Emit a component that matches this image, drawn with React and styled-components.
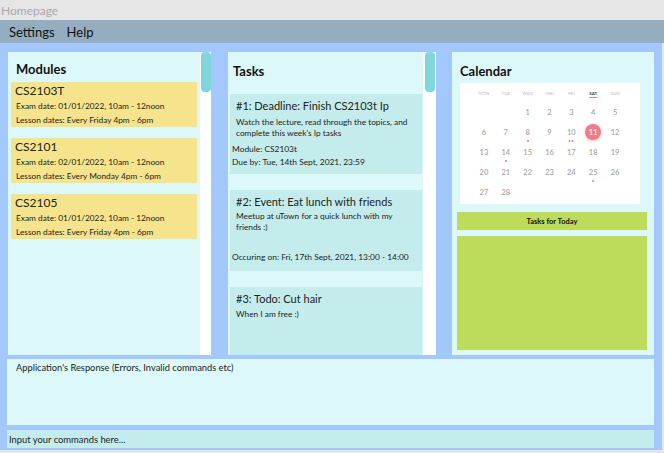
import React from 'react'
import styled, { createGlobalStyle } from 'styled-components'

const Global = createGlobalStyle`
    html, body { margin: 0; padding: 0; }
    body {
        width: 664px;
        height: 453px;
        overflow: hidden;
        font-family: Lato, "Noto Sans", sans-serif;
        background: #e6e6e6;
    }
`

const Window = styled.div`
    width: 664px;
    height: 453px;
    display: flex;
    flex-direction: column;
`
const TitleBar = styled.div`
    height: 20px;
    background: #e6e6e6;
    color: #a8a8a8;
    font-size: 12px;
    line-height: 22px;
    padding-left: 1px;
`
const MenuBar = styled.div`
    height: 23px;
    background: #95adc1;
    display: flex;
    gap: 12px;
    padding-left: 9px;
    align-items: center;
    font-size: 13px;
    color: #111;
`
const Main = styled.div`
    flex: 1;
    background: #a3c8fd;
    margin-right: 2px;
    margin-bottom: 3px;
    padding: 9px 8px 2px 7px;
    display: flex;
    flex-direction: column;
`
const Row = styled.div`
    display: flex;
    height: 303px;
    padding-left: 1px;
`
const Panel = styled.div`
    width: ${p => p.w}px;
    margin-right: ${p => p.mr || 0}px;
    background: #ddf8f9;
    display: flex;
    overflow: hidden;
`
const PanelBody = styled.div`
    flex: 1;
    min-width: 0;
    padding: ${p => p.pad};
    display: flex;
    flex-direction: column;
`
const Track = styled.div`
    width: ${p => p.w}px;
    background: #fff;
    display: flex;
    justify-content: center;
`
const Thumb = styled.div`
    width: 10px;
    height: 40px;
    border-radius: 4px;
    background: #7fd7dd;
`
const PanelTitle = styled.div`
    font-weight: 700;
    font-size: 13px;
    color: #111;
    margin: ${p => p.m};
`
const ModuleCard = styled.div`
    background: #f5e48c;
    height: 45px;
    margin-bottom: 11px;
    padding: 2px 0 0 4px;
    box-sizing: border-box;
    color: #222;
`
const ModuleCode = styled.div`
    font-size: 12px;
    line-height: 14px;
    margin-bottom: 1px;
`
const Small = styled.div`
    font-size: ${p => p.fs || 8.3}px;
    line-height: ${p => p.lh || 14}px;
    color: #222;
    padding-left: ${p => p.pl || 0}px;
    margin-top: ${p => p.mt || 0}px;
    white-space: nowrap;
`
const TaskCard = styled.div`
    background: #c5ecec;
    height: ${p => p.h}px;
    margin-bottom: ${p => p.mb || 0}px;
    padding: 5px 0 0 2px;
    box-sizing: border-box;
    flex-shrink: 0;
`
const TaskTitle = styled.div`
    font-size: 11px;
    color: #222;
    padding-left: 4px;
    line-height: 14px;
    margin-bottom: 2px;
`
const CalBox = styled.div`
    margin: 4px 14px 0 8px;
    background: #fff;
    height: 121px;
    padding: 2px 14px 0 13px;
    box-sizing: border-box;
    display: grid;
    grid-template-columns: repeat(7, 1fr);
    grid-auto-rows: 20px;
    grid-template-rows: 18px;
`
const WeekDay = styled.div`
    font-size: 4.5px;
    color: ${p => (p.active ? '#444' : '#bbb')};
    font-weight: ${p => (p.active ? 700 : 400)};
    display: flex;
    flex-direction: column;
    align-items: center;
    padding-top: 6px;
    &::after {
        content: '';
        width: 8px;
        height: 1px;
        margin-top: 1px;
        background: ${p => (p.active ? '#f27a89' : 'transparent')};
    }
`
const Day = styled.div`
    position: relative;
    display: flex;
    align-items: center;
    justify-content: center;
    font-size: 7.5px;
    font-weight: 600;
    color: #a8a8a8;
    padding-bottom: 2px;
`
const Today = styled.span`
    width: 16px;
    height: 16px;
    border-radius: 50%;
    background: #f27a89;
    color: #fff;
    display: flex;
    align-items: center;
    justify-content: center;
    box-shadow: 0 1px 3px rgba(242, 122, 137, 0.5);
`
const Dots = styled.span`
    position: absolute;
    bottom: 1px;
    left: 50%;
    transform: translateX(-50%);
    display: flex;
    gap: 1px;
    i {
        width: 2px;
        height: 2px;
        border-radius: 50%;
        background: #f27a89;
    }
`
const TodayBar = styled.div`
    margin: 8px 7px 0 5px;
    height: 18px;
    background: #bddc5c;
    font-size: 7.5px;
    font-weight: 700;
    color: #111;
    display: flex;
    align-items: center;
    justify-content: center;
`
const TodayBox = styled.div`
    margin: 6px 7px 5px 5px;
    flex: 1;
    background: #bddc5c;
`
const Response = styled.div`
    margin-top: 4px;
    height: 66px;
    background: #ddf8f9;
    font-size: 9.3px;
    color: #222;
    padding: 3px 0 0 9px;
    box-sizing: border-box;
`
const Input = styled.div`
    margin-top: 5px;
    height: 18px;
    background: #c5ecec;
    font-size: 9.4px;
    color: #222;
    padding-left: 2px;
    display: flex;
    align-items: center;
`

const modules = [
    { code: 'CS2103T', exam: '01/01/2022, 10am - 12noon', lesson: 'Every Friday 4pm - 6pm' },
    { code: 'CS2101', exam: '02/01/2022, 10am - 12noon', lesson: 'Every Monday 4pm - 6pm' },
    { code: 'CS2105', exam: '01/01/2022, 10am - 12noon', lesson: 'Every Friday 4pm - 6pm' },
]

const weekdays = ['MON', 'TUE', 'WED', 'THU', 'FRI', 'SAT', 'SUN']
const dots = { 8: 1, 10: 2, 14: 1, 25: 1 }

function Calendar() {
    const cells = [null, null]
    for (let d = 1; d <= 28; d++) cells.push(d)
    return (
        <CalBox>
            {weekdays.map(w => (
                <WeekDay key={w} active={w === 'SAT'}>{w}</WeekDay>
            ))}
            {cells.map((d, i) => (
                <Day key={i}>
                    {d === 11 ? <Today>11</Today> : d}
                    {dots[d] && (
                        <Dots>
                            {Array.from({ length: dots[d] }).map((_, j) => <i key={j} />)}
                        </Dots>
                    )}
                </Day>
            ))}
        </CalBox>
    )
}

export default function App() {
    return (
        <Window>
            <Global />
            <TitleBar>Homepage</TitleBar>
            <MenuBar>
                <span>Settings</span>
                <span>Help</span>
            </MenuBar>
            <Main>
                <Row>
                    <Panel w={203} mr={17}>
                        <PanelBody pad="0 3px 0 3px">
                            <PanelTitle m="9px 0 5px 5px">Modules</PanelTitle>
                            {modules.map(m => (
                                <ModuleCard key={m.code}>
                                    <ModuleCode>{m.code}</ModuleCode>
                                    <Small pl={1}>Exam date: {m.exam}</Small>
                                    <Small pl={1}>Lesson dates: {m.lesson}</Small>
                                </ModuleCard>
                            ))}
                        </PanelBody>
                        <Track w={11}><Thumb /></Track>
                    </Panel>
                    <Panel w={208} mr={16}>
                        <PanelBody pad="0 1px 0 2px">
                            <PanelTitle m="11px 0 15px 3px">Tasks</PanelTitle>
                            <TaskCard h={80} mb={16}>
                                <TaskTitle>#1: Deadline: Finish CS2103t Ip</TaskTitle>
                                <Small pl={4} lh={11} mt={4}>Watch the lecture, read through the topics, and<br />complete this week's Ip tasks</Small>
                                <Small fs={8.4} mt={4} lh={13}>Module: CS2103t</Small>
                                <Small fs={8.4} lh={13}>Due by: Tue, 14th Sept, 2021, 23:59</Small>
                            </TaskCard>
                            <TaskCard h={81} mb={16}>
                                <TaskTitle>#2: Event: Eat lunch with friends</TaskTitle>
                                <Small pl={4} lh={11} mt={2}>Meetup at uTown for a quick lunch with my<br />friends :)</Small>
                                <Small fs={8.4} mt={18} lh={13}>Occuring on: Fri, 17th Sept, 2021, 13:00 - 14:00</Small>
                            </TaskCard>
                            <TaskCard h={80}>
                                <TaskTitle>#3: Todo: Cut hair</TaskTitle>
                                <Small pl={4} lh={13} mt={2}>When I am free :)</Small>
                            </TaskCard>
                        </PanelBody>
                        <Track w={13}><Thumb /></Track>
                    </Panel>
                    <Panel w={202}>
                        <PanelBody pad="0">
                            <PanelTitle m="11px 0 0 8px">Calendar</PanelTitle>
                            <Calendar />
                            <TodayBar>Tasks for Today</TodayBar>
                            <TodayBox />
                        </PanelBody>
                    </Panel>
                </Row>
                <Response>Application's Response (Errors, Invalid commands etc)</Response>
                <Input>Input your commands here...</Input>
            </Main>
        </Window>
    )
}
